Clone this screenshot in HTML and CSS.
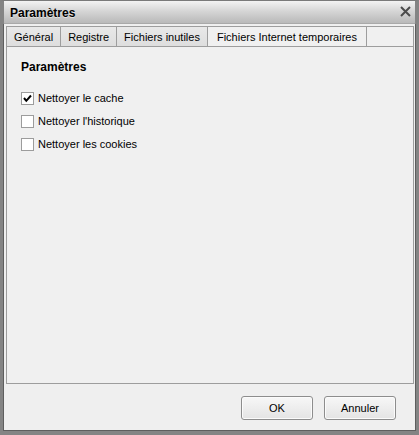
FILE: index.html
```html
<!DOCTYPE html>
<html lang="fr">

<head>
    <meta charset="UTF-8">
    <meta name="viewport" content="width=device-width, initial-scale=1.0">
    <title>Paramètres</title>
    <link rel="stylesheet" href="styles.css">
</head>

<body>

    <div class="window">
        <div class="titlebar">
            <span class="title">Paramètres</span>
            <span class="close">
                <svg width="11" height="11" viewBox="0 0 11 11">
                    <path d="M1 1 L10 10 M10 1 L1 10" stroke="#4b4b4b" stroke-width="2" fill="none" />
                </svg>
            </span>
        </div>

        <div class="body">
            <div class="tabs">
                <div class="tab">Général</div>
                <div class="tab">Registre</div>
                <div class="tab">Fichiers inutiles</div>
                <div class="tab active">Fichiers Internet temporaires</div>
            </div>

            <div class="panel">
                <h2>Paramètres</h2>
                <label class="check">
                    <span class="box">
                        <svg width="11" height="11" viewBox="0 0 11 11">
                            <path d="M2 5 L4.3 7.8 L9 2.5" stroke="#000" stroke-width="2" fill="none" />
                        </svg>
                    </span>
                    Nettoyer le cache
                </label>
                <label class="check"><span class="box"></span>Nettoyer l'historique</label>
                <label class="check"><span class="box"></span>Nettoyer les cookies</label>
            </div>

            <div class="footer">
                <button class="btn">OK</button>
                <button class="btn">Annuler</button>
            </div>
        </div>
    </div>

</body>

</html>
```

FILE: styles.css
```css
body {
    margin: 0;
    font-family: "Liberation Sans", Arial, sans-serif;
    font-size: 11px;
    color: #000;
    background: #efefef;
}

.window {
    width: 419px;
    height: 435px;
    box-sizing: border-box;
    border: 4px solid #848484;
    border-top: 1px solid #7a7a7a;
    box-shadow: inset 0 -1px 0 #5c5c5c;
    display: flex;
    flex-direction: column;
    background: #efefef;
}

.titlebar {
    height: 23px;
    padding: 1px 4px 0 6px;
    box-sizing: border-box;
    display: flex;
    align-items: center;
    justify-content: space-between;
    background: linear-gradient(#f3f3f3, #d6d6d6 45%, #b9b9b9);
    border-bottom: 1px solid #a9a9a9;
}

.title {
    font-size: 12px;
    font-weight: bold;
    text-shadow: 0 1px 0 rgba(255, 255, 255, 0.5);
}

.close {
    display: flex;
    margin-top: -2px;
}

.body {
    flex: 1;
    display: flex;
    flex-direction: column;
    padding: 2px 1px 0 2px;
    border-left: 1px solid #5e5e5e;
    border-right: 1px solid #5e5e5e;
    border-bottom: 1px solid #5e5e5e;
    margin: 0 -1px;
}

.tabs {
    display: flex;
    height: 20px;
    box-sizing: border-box;
    border: 1px solid #9d9d9d;
    border-bottom: none;
    background: #f0f0f0;
}

.tab {
    padding: 1px 7px 0;
    line-height: 18px;
    background: linear-gradient(#e8e8e8, #dedede);
    border-right: 1px solid #9d9d9d;
    white-space: nowrap;
}

.tab.active {
    background: #f0f0f0;
    padding: 1px 9px 0;
    height: 20px;
    box-sizing: border-box;
    margin-bottom: -1px;
}

.panel {
    flex: 1;
    border: 1px solid #9d9d9d;
    background: #f0f0f0;
    padding: 13px 14px;
}

.panel h2 {
    margin: 0 0 18px;
    font-size: 12px;
    line-height: 14px;
    font-weight: bold;
}

.check {
    display: flex;
    align-items: center;
    gap: 4px;
    height: 13px;
    line-height: 13px;
    margin-bottom: 10px;
}

.box {
    width: 13px;
    height: 13px;
    box-sizing: border-box;
    border: 1px solid #9c9c9c;
    background: #fff;
    display: flex;
    align-items: center;
    justify-content: center;
}

.footer {
    height: 46px;
    display: flex;
    justify-content: flex-end;
    align-items: flex-start;
    gap: 11px;
    padding: 12px 18px 0 0;
    box-sizing: border-box;
}

.btn {
    width: 72px;
    height: 24px;
    font-family: "Liberation Sans", Arial, sans-serif;
    font-size: 11px;
    color: #000;
    border: 1px solid #8d8d8d;
    border-radius: 3px;
    background: linear-gradient(#f7f7f7, #e4e4e4);
    box-shadow: inset 0 0 0 1px #fbfbfb;
    padding: 0;
}
```
